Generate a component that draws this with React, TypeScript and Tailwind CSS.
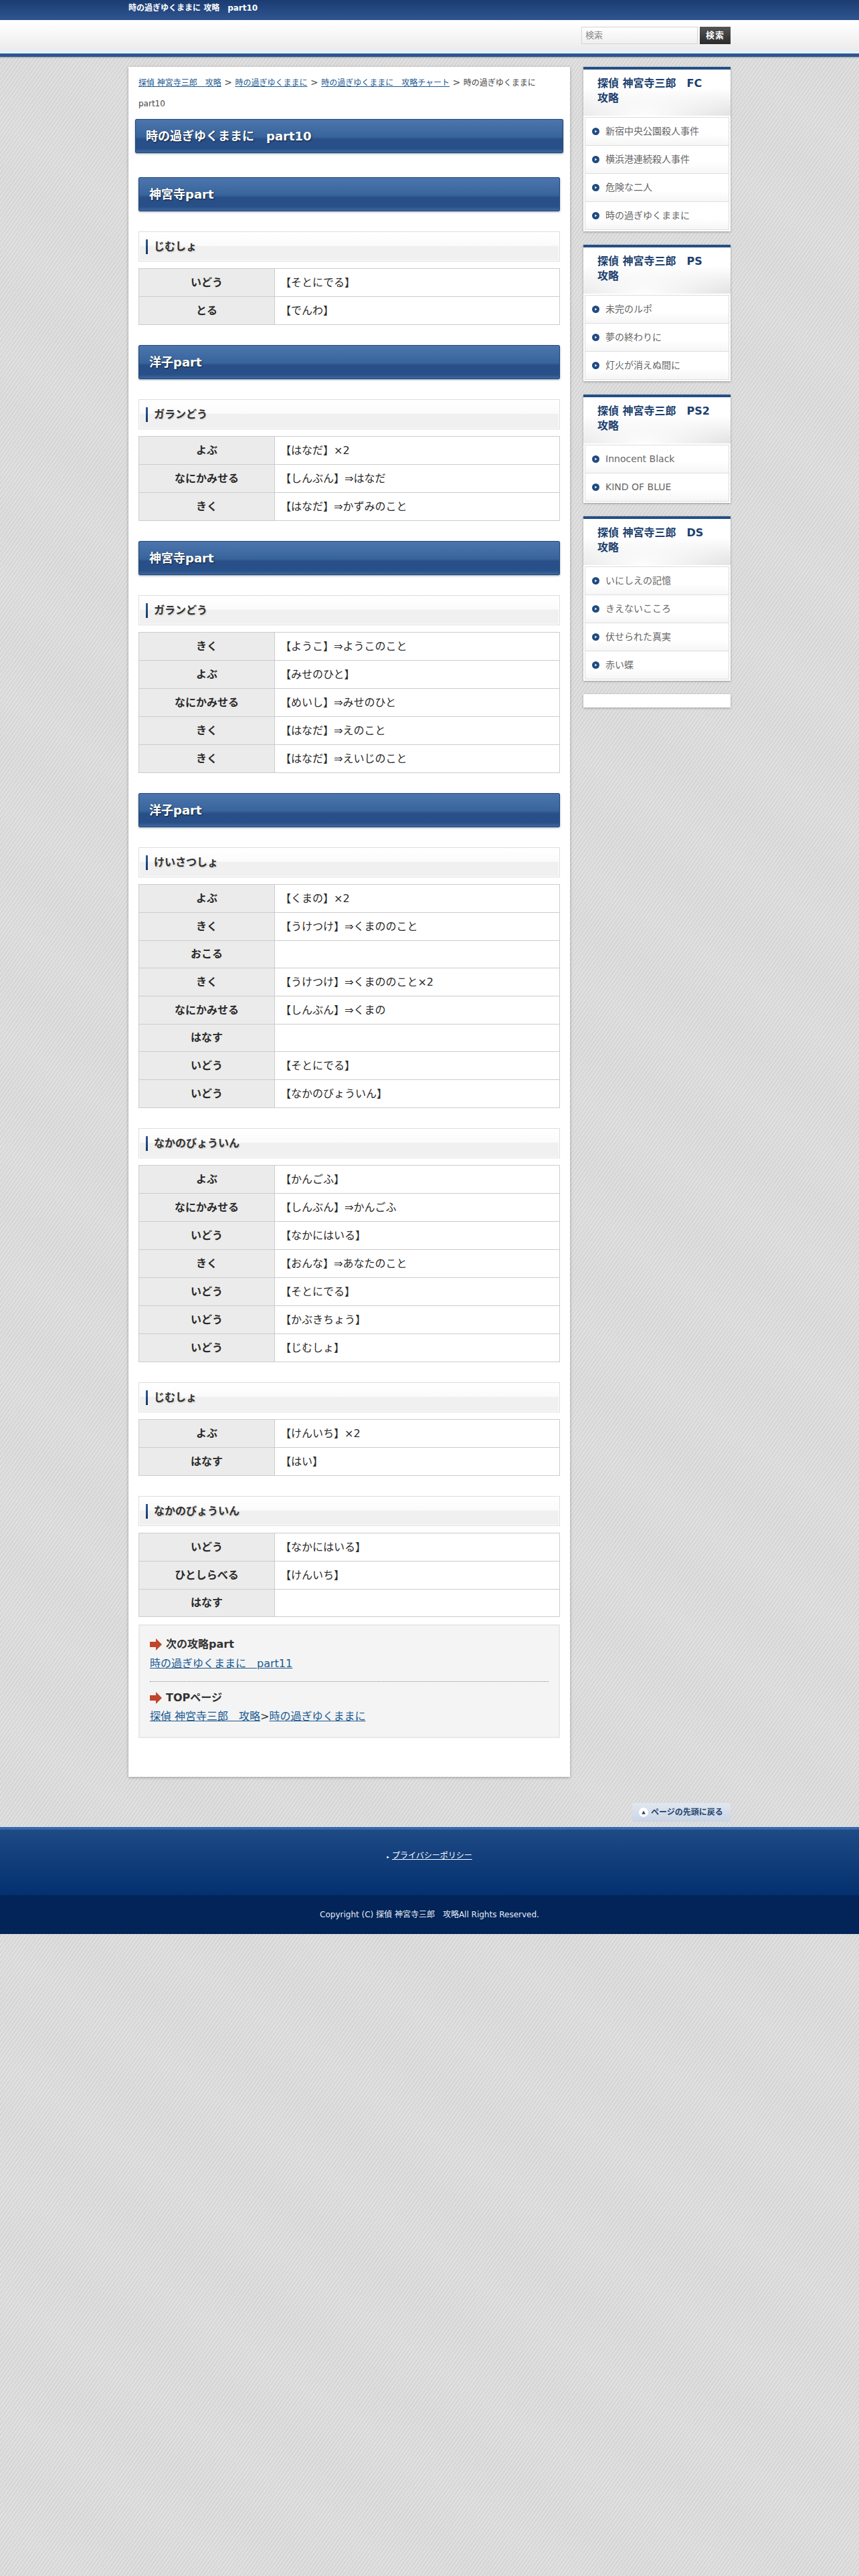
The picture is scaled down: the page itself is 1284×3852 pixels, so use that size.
const texture =
  "bg-[#dddddd] bg-[repeating-linear-gradient(125deg,rgba(0,0,0,0.035)_0px,rgba(0,0,0,0.035)_2px,rgba(255,255,255,0.22)_3px,rgba(0,0,0,0.02)_4.5px),repeating-linear-gradient(35deg,rgba(255,255,255,0)_0px,rgba(255,255,255,0.06)_70px,rgba(255,255,255,0)_140px)]";

type Row = [string, string];

interface Section {
  part?: string;
  place: string;
  rows: Row[];
}

const sections: Section[] = [
  { part: "神宮寺part", place: "じむしょ", rows: [["いどう", "【そとにでる】"], ["とる", "【でんわ】"]] },
  {
    part: "洋子part",
    place: "ガランどう",
    rows: [["よぶ", "【はなだ】×2"], ["なにかみせる", "【しんぶん】⇒はなだ"], ["きく", "【はなだ】⇒かずみのこと"]],
  },
  {
    part: "神宮寺part",
    place: "ガランどう",
    rows: [
      ["きく", "【ようこ】⇒ようこのこと"],
      ["よぶ", "【みせのひと】"],
      ["なにかみせる", "【めいし】⇒みせのひと"],
      ["きく", "【はなだ】⇒えのこと"],
      ["きく", "【はなだ】⇒えいじのこと"],
    ],
  },
  {
    part: "洋子part",
    place: "けいさつしょ",
    rows: [
      ["よぶ", "【くまの】×2"],
      ["きく", "【うけつけ】⇒くまののこと"],
      ["おこる", ""],
      ["きく", "【うけつけ】⇒くまののこと×2"],
      ["なにかみせる", "【しんぶん】⇒くまの"],
      ["はなす", ""],
      ["いどう", "【そとにでる】"],
      ["いどう", "【なかのびょういん】"],
    ],
  },
  {
    place: "なかのびょういん",
    rows: [
      ["よぶ", "【かんごふ】"],
      ["なにかみせる", "【しんぶん】⇒かんごふ"],
      ["いどう", "【なかにはいる】"],
      ["きく", "【おんな】⇒あなたのこと"],
      ["いどう", "【そとにでる】"],
      ["いどう", "【かぶきちょう】"],
      ["いどう", "【じむしょ】"],
    ],
  },
  { place: "じむしょ", rows: [["よぶ", "【けんいち】×2"], ["はなす", "【はい】"]] },
  {
    place: "なかのびょういん",
    rows: [["いどう", "【なかにはいる】"], ["ひとしらべる", "【けんいち】"], ["はなす", ""]],
  },
];

const sideMenus = [
  { title: "探偵 神宮寺三郎　FC攻略", items: ["新宿中央公園殺人事件", "横浜港連続殺人事件", "危険な二人", "時の過ぎゆくままに"] },
  { title: "探偵 神宮寺三郎　PS攻略", items: ["未完のルポ", "夢の終わりに", "灯火が消えぬ間に"] },
  { title: "探偵 神宮寺三郎　PS2攻略", items: ["Innocent Black", "KIND OF BLUE"] },
  { title: "探偵 神宮寺三郎　DS攻略", items: ["いにしえの記憶", "きえないこころ", "伏せられた真実", "赤い蝶"] },
];

function Bullet() {
  return (
    <svg width="11" height="11" viewBox="0 0 11 11" className="shrink-0">
      <circle cx="5.5" cy="5.5" r="5.5" fill="#1f4a80" />
      <path d="M4.2 3.4l3.4 2.1-3.4 2.1z" fill="#e8f0f8" />
    </svg>
  );
}

function RedArrow() {
  return (
    <svg width="18" height="18" viewBox="0 0 18 18" className="shrink-0">
      <path d="M0 5h9V0l9 9-9 9v-5H0z" fill="#c0452a" />
    </svg>
  );
}

function BlueBar({ children, wide }: { children: string; wide?: boolean }) {
  return (
    <div
      className={`flex h-[51px] items-center rounded-[2px] border border-[#1f4477] bg-[linear-gradient(#4c75ad_0%,#38649c_52%,#284f88_60%,#284f88_88%,#3d69a3_100%)] pl-[15px] text-[18px] font-bold text-white shadow-[0_1px_3px_rgba(0,0,0,0.35)] [text-shadow:1px_1px_2px_rgba(0,0,0,0.6)] ${
        wide ? "mx-[10px]" : "mx-[15px]"
      }`}
    >
      {children}
    </div>
  );
}

function PlaceHeading({ children }: { children: string }) {
  return (
    <div className="mx-[15px] mt-[30px] flex h-[45px] items-center border border-[#dddddd] bg-[linear-gradient(#ffffff_0%,#fbfbfb_47%,#f0f0f0_49%,#f0f0f0_100%)] pl-[10px] shadow-[inset_0_0_0_1px_#fff]">
      <span className="h-[22px] w-[3px] bg-[linear-gradient(#2f5a94,#123a68)]" />
      <span className="ml-[9px] text-[16px] font-bold text-[#333333] [text-shadow:1px_1px_2px_rgba(0,0,0,0.2)]">{children}</span>
    </div>
  );
}

function Steps({ rows }: { rows: Row[] }) {
  return (
    <table className="mx-[15px] mt-[10px] w-[630px] table-fixed border-collapse text-[16px] text-[#2a2a2a]">
      <tbody>
        {rows.map((row, i) => (
          <tr key={i} className={row[1] ? "h-[42px]" : "h-[41px]"}>
            <th className="w-[203px] border border-[#cccccc] bg-[#ebebeb] p-0 text-center font-bold">{row[0]}</th>
            <td className="border border-[#cccccc] bg-white px-2 py-0">{row[1]}</td>
          </tr>
        ))}
      </tbody>
    </table>
  );
}

function SideMenu({ title, items }: { title: string; items: string[] }) {
  return (
    <div className="bg-white pb-[2px] shadow-[0_1px_3px_rgba(0,0,0,0.3)]">
      <h3 className="h-[73px] border-t-4 border-[#244f86] bg-[radial-gradient(ellipse_130px_55px_at_90px_70px,rgba(255,255,255,0.95),rgba(255,255,255,0)),linear-gradient(#ffffff_0%,#ffffff_40%,#e2e2e2_100%)] pl-[21px] pr-[30px] pt-[10px] text-[16px] leading-[22px] font-bold text-[#1c3f6e]">
        {title}
      </h3>
      <ul className="mx-[2px] mt-[2px] border border-[#dddddd]">
        {items.map((item, i) => (
          <li
            key={item}
            className={`flex items-center gap-[9px] bg-[linear-gradient(#ffffff_60%,#f6f6f6_100%)] pl-[10px] text-[14px] text-[#666666] ${
              i > 0 ? "h-[42px] border-t border-[#dddddd]" : "h-[41px]"
            }`}
          >
            <Bullet />
            {item}
          </li>
        ))}
      </ul>
    </div>
  );
}

export default function App() {
  return (
    <div className={`min-h-[3852px] [font-family:'DejaVu_Sans','Noto_Sans_CJK_JP',sans-serif] ${texture}`}>
      {/* top strip */}
      <div className="h-[30px] bg-[linear-gradient(#1a3c72,#2f5590)]">
        <div className="mx-auto w-[900px] text-[12px] leading-[25px] font-bold text-white">時の過ぎゆくままに 攻略　part10</div>
      </div>

      {/* search band */}
      <div className="h-[45px] bg-[linear-gradient(#ffffff_10%,#ebebeb_100%)]">
        <div className="mx-auto flex w-[900px] justify-end gap-[3px] pt-[10px]">
          <div className="flex h-[26px] w-[174px] items-center border border-[#d4d4d4] bg-[linear-gradient(#ffffff,#f0f0f0)] pl-[5px] text-[13px] text-[#888888]">
            検索
          </div>
          <div className="flex h-[26px] w-[46px] items-center justify-center bg-[linear-gradient(#555555,#2a2a2a)] text-[13px] font-bold tracking-[1px] text-white">
            検索
          </div>
        </div>
      </div>
      <div className="h-[5px] bg-[#e3f1f8]" />
      <div className="h-[5px] bg-[#2f5590] shadow-[0_1px_2px_rgba(0,0,0,0.3)]" />

      {/* body */}
      <div className="mx-auto mt-[15px] flex w-[900px] items-start justify-between">
        <main className="h-[2557px] w-[660px] bg-white pt-[8px] shadow-[0_1px_4px_rgba(0,0,0,0.3)]">
          <p className="h-[60px] px-[15px] text-[14px] leading-[30px] text-[#444444]">
            <a className="text-[12px] text-[#1a5a92] underline">探偵 神宮寺三郎　攻略</a> &gt;{" "}
            <a className="text-[12px] text-[#1a5a92] underline">時の過ぎゆくままに</a> &gt;{" "}
            <a className="text-[12px] text-[#1a5a92] underline">時の過ぎゆくままに　攻略チャート</a> &gt;{" "}
            <span className="text-[12px]">時の過ぎゆくままに　part10</span>
          </p>
          <div className="mt-[10px]">
            <BlueBar wide>時の過ぎゆくままに　part10</BlueBar>
          </div>
          <div className="mt-[36px]">
            {sections.map((section, i) => (
              <section key={i} className={i > 0 ? "mt-[30px]" : ""}>
                {section.part && <BlueBar>{section.part}</BlueBar>}
                <PlaceHeading>{section.place}</PlaceHeading>
                <Steps rows={section.rows} />
              </section>
            ))}
          </div>

          {/* next links */}
          <div className="mx-[15px] mt-[11px] h-[170px] border-2 border-[#e8e8e8] bg-[#f4f4f4] px-[15px] pt-[16px] text-[16px] text-[#333333]">
            <div className="flex items-center gap-[6px] font-bold">
              <RedArrow />
              次の攻略part
            </div>
            <a className="mt-[5px] block text-[#1a5a92] underline">時の過ぎゆくままに　part11</a>
            <div className="mt-[14px] border-t border-dotted border-[#888888]" />
            <div className="mt-[12px] flex items-center gap-[6px] font-bold">
              <RedArrow />
              TOPページ
            </div>
            <div className="mt-[4px]">
              <a className="text-[#1a5a92] underline">探偵 神宮寺三郎　攻略</a>&gt;
              <a className="text-[#1a5a92] underline">時の過ぎゆくままに</a>
            </div>
          </div>
        </main>

        <aside className="flex w-[220px] flex-col gap-[20px]">
          {sideMenus.map((menu) => (
            <SideMenu key={menu.title} title={menu.title} items={menu.items} />
          ))}
          <div className="h-[20px] bg-white shadow-[0_1px_3px_rgba(0,0,0,0.3)]" />
        </aside>
      </div>

      {/* back to top */}
      <div className="mx-auto mt-[39px] flex w-[900px] justify-end">
        <div className="flex h-[28px] w-[147px] items-center gap-[4px] rounded-[3px] bg-[linear-gradient(#e2e7ef,#c9d5e6)] pl-[10px] text-[12px] font-bold text-[#24426e]">
          <span className="flex h-[14px] w-[14px] items-center justify-center rounded-full bg-white text-[7px] leading-none text-[#24426e]">▲</span>
          ページの先頭に戻る
        </div>
      </div>

      {/* footer */}
      <footer className="mt-[8px]">
        <div className="h-[102px] border-t-4 border-[#3767ab] bg-[linear-gradient(#1e4a85,#03306f)] pt-[30px] text-center text-[12px] text-white">
          <span className="mr-[4px] text-[7px]">▸</span>
          <a className="underline">プライバシーポリシー</a>
        </div>
        <div className="flex h-[58px] items-center justify-center bg-[#022458] text-[12px] text-[#e4ecf5]">
          Copyright (C) 探偵 神宮寺三郎　攻略All Rights Reserved.
        </div>
      </footer>
    </div>
  );
}
